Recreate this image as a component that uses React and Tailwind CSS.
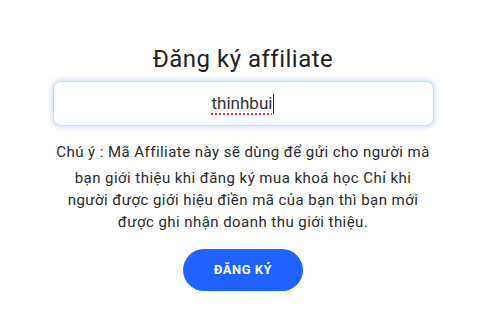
export default function App() {
  return (
    <div className="w-[489px] h-[328px] bg-white pr-[3px] pt-[44px] flex flex-col items-center font-['Roboto',sans-serif]">
      <h1 className="text-[24px] leading-[30px] text-[#222] font-normal tracking-[0.5px]">Đăng ký affiliate</h1>
      <div className="mt-[7px] w-[381px] h-[45px] rounded-[8px] border border-[#c6dcf7] shadow-[0_0_4px_2px_rgba(176,208,250,0.55)] bg-white flex items-center justify-center">
        <span className="text-[17px] text-[#333] underline decoration-dotted decoration-[#e33] decoration-2 underline-offset-[5px]">thinhbui</span>
        <span className="w-px h-[20px] bg-[#222] ml-[1px]"></span>
      </div>
      <div className="mt-[15px] text-[15px] leading-[22px] text-[#2a2a2a] text-center tracking-[0.45px]">
        <div className="mb-[4px]">Chú ý : Mã Affiliate này sẽ dùng để gửi cho người mà</div>
        <div>bạn giới thiệu khi đăng ký mua khoá học Chỉ khi</div>
        <div>người được giới hiệu điền mã của bạn thì bạn mới</div>
        <div>được ghi nhận doanh thu giới thiệu.</div>
      </div>
      <button className="mt-[16px] w-[120px] h-[42px] rounded-full bg-[#1f62ff] text-white text-[13px] font-bold tracking-[0.5px]">ĐĂNG KÝ</button>
    </div>
  );
}
